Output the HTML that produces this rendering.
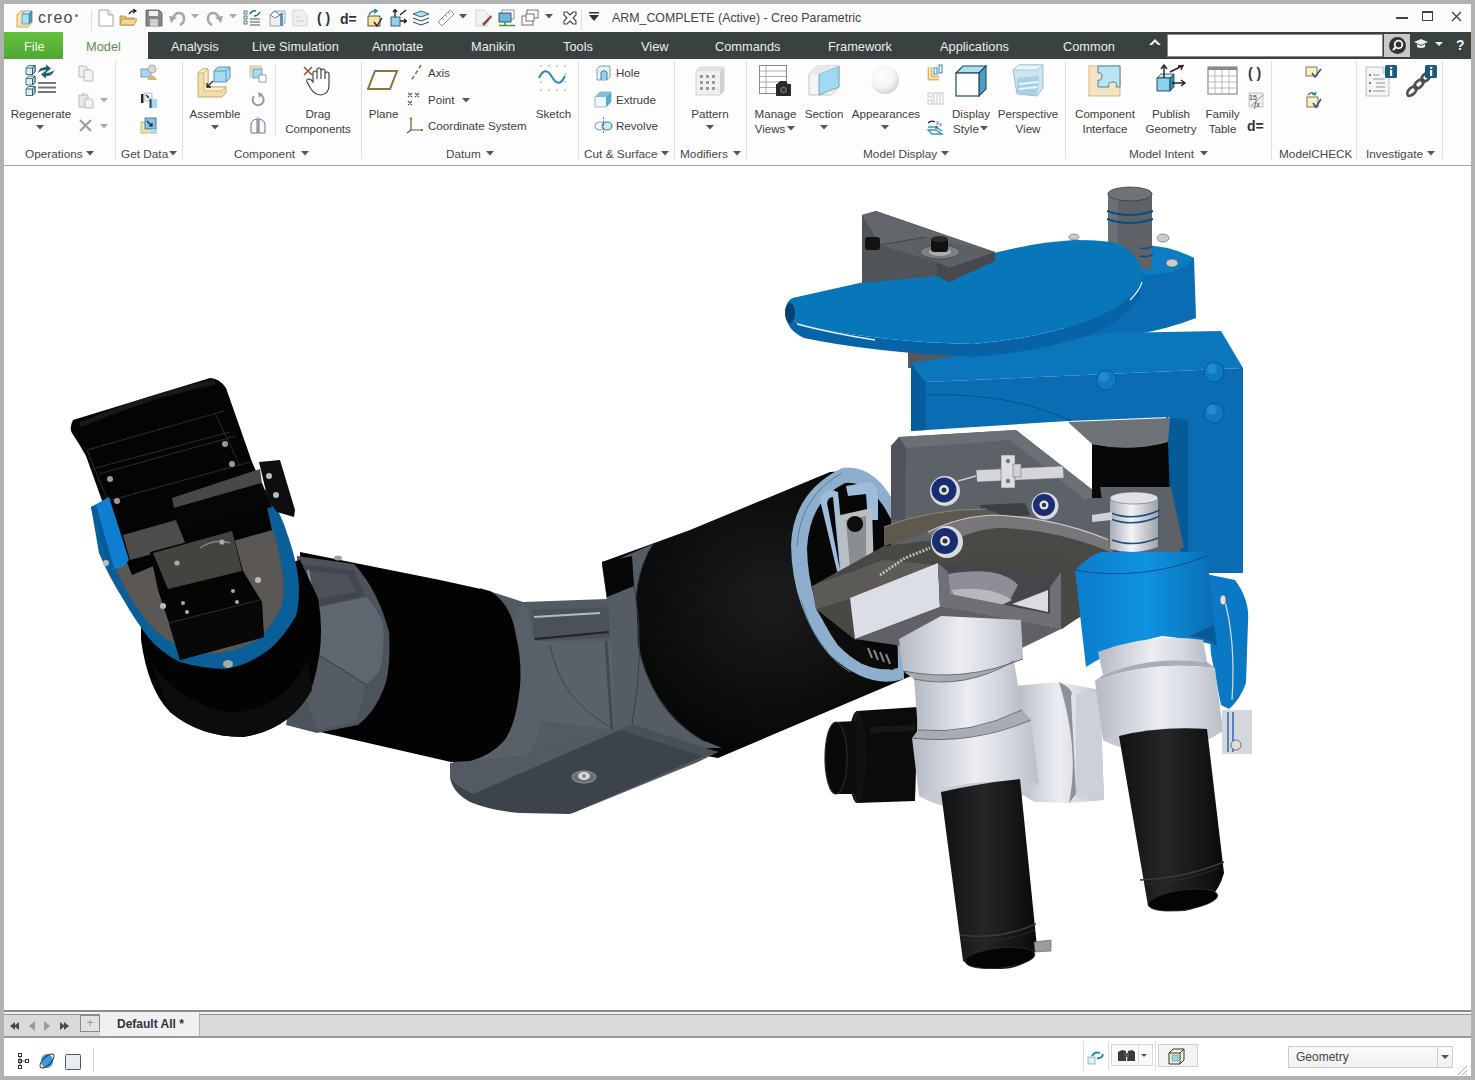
<!DOCTYPE html>
<html><head><meta charset="utf-8">
<style>
*{margin:0;padding:0;box-sizing:border-box}
html,body{width:1475px;height:1080px;overflow:hidden;background:#b2b2b2;font-family:"Liberation Sans",sans-serif;position:relative}
.a{position:absolute;white-space:nowrap}
.tab{position:absolute;top:33px;height:27px;line-height:27px;font-size:12.8px;color:#ececec}
.rt{position:absolute;font-size:11.6px;color:#3c3c3c;line-height:15px;text-align:center}
.gl{position:absolute;top:146px;font-size:11.8px;color:#444;line-height:14px}
.sep{position:absolute;top:65px;width:1px;height:94px;background:#dcdcdc}
.dd{display:inline-block;width:0;height:0;border-left:4px solid transparent;border-right:4px solid transparent;border-top:4px solid #555;vertical-align:middle;margin-left:4px;position:relative;top:-1px}
</style></head><body>
<!-- title bar -->
<div class="a" style="left:4px;top:4px;width:1467px;height:28px;background:#fbfbfb"></div>
<svg class="a" style="left:16px;top:10px" width="20" height="18" viewBox="0 0 20 18">
  <path d="M1 5 L5 1 L9 1 L9 11 L16 11 L16 13 L12 17 L1 17 Z" fill="#f7e2b2" stroke="#b39a66" stroke-width="0.8"/>
  <path d="M6 4 L9 1 L16 1 L13 4 Z" fill="#cdeefa" stroke="#3c7a94" stroke-width="0.6"/>
  <path d="M13 4 L16 1 L16 11 L13 14 Z" fill="#4f9fc4" stroke="#2c5a70" stroke-width="0.6"/>
  <rect x="6" y="4" width="7" height="10" fill="#a8def3" stroke="#3c7a94" stroke-width="0.6"/>
</svg>
<div class="a" style="left:38px;top:9px;font-size:16px;line-height:18px;color:#4a4a4a;letter-spacing:1.1px">creo</div><div class="a" style="left:75px;top:14px;width:3px;height:3px;border-radius:2px;background:#777"></div>
<div class="a" style="left:91px;top:10px;width:1px;height:21px;background:#dcdcdc"></div>
<!--QAT-->
<div class="a" style="left:612px;top:10px;font-size:12.4px;line-height:16px;color:#444">ARM_COMPLETE (Active) - Creo Parametric</div>
<div class="a" style="left:1396px;top:17px;width:12px;height:2px;background:#444"></div>
<div class="a" style="left:1422px;top:11px;width:11px;height:10px;border:1px solid #444;border-top-width:2px"></div>
<svg class="a" style="left:1451px;top:11px" width="11" height="11"><path d="M1 1 L10 10 M10 1 L1 10" stroke="#444" stroke-width="1.4"/></svg>

<!-- tabs -->
<div class="a" style="left:4px;top:32px;width:1467px;height:27px;background:#fbfbfb"></div>
<div class="a" style="left:4px;top:32px;width:59px;height:27px;background:linear-gradient(#66c03f,#4ea831)"></div>
<div class="tab" style="left:24px;color:#f0fbe8">File</div>
<div class="tab" style="left:86px;color:#5f8f50">Model</div>
<div class="a" style="left:148px;top:32px;width:1323px;height:27px;background:#394141"></div>
<div class="tab" style="left:171px">Analysis</div>
<div class="tab" style="left:252px">Live Simulation</div>
<div class="tab" style="left:372px">Annotate</div>
<div class="tab" style="left:471px">Manikin</div>
<div class="tab" style="left:563px">Tools</div>
<div class="tab" style="left:641px">View</div>
<div class="tab" style="left:715px">Commands</div>
<div class="tab" style="left:828px">Framework</div>
<div class="tab" style="left:940px">Applications</div>
<div class="tab" style="left:1063px">Common</div>
<svg class="a" style="left:1148px;top:37px" width="14" height="10"><path d="M1 8 L7 2 L13 8 L10 8 L7 5 L4 8 Z" fill="#f4f4f4"/></svg>
<div class="a" style="left:1167px;top:34px;width:216px;height:23px;background:#fff;border:1px solid #8a8a8a"></div>
<div class="a" style="left:1384px;top:34px;width:26px;height:23px;background:#c9c9c9"></div>
<svg class="a" style="left:1388px;top:36px" width="19" height="19"><circle cx="9.5" cy="9.5" r="8.5" fill="#2f3333"/><circle cx="10.5" cy="8.5" r="3.8" fill="none" stroke="#fff" stroke-width="1.8"/><path d="M8 11 L5 14" stroke="#fff" stroke-width="2.2"/></svg>
<svg class="a" style="left:1413px;top:38px" width="16" height="12"><path d="M1 4 L8 1 L15 4 L8 7 Z" fill="#eee"/><path d="M4 6 L4 9 Q8 11 12 9 L12 6 L8 8 Z" fill="#eee"/></svg>
<svg class="a" style="left:1434px;top:41px" width="10" height="6"><path d="M1 1 L9 1 L5 5 Z" fill="#eee"/></svg>
<div class="a" style="left:1456px;top:36px;font-size:14px;font-weight:bold;color:#f4f4f4;line-height:18px">?</div>

<!-- ribbon -->
<div class="a" style="left:4px;top:59px;width:1467px;height:107px;background:#fdfdfd;border-bottom:1px solid #a8a8a8"></div>
<div class="a" style="left:115px;top:61px;width:1px;height:98px;background:#dedede"></div>
<div class="a" style="left:182px;top:61px;width:1px;height:98px;background:#dedede"></div>
<div class="a" style="left:361px;top:61px;width:1px;height:98px;background:#dedede"></div>
<div class="a" style="left:578px;top:61px;width:1px;height:98px;background:#dedede"></div>
<div class="a" style="left:674px;top:61px;width:1px;height:98px;background:#dedede"></div>
<div class="a" style="left:746px;top:61px;width:1px;height:98px;background:#dedede"></div>
<div class="a" style="left:1065px;top:61px;width:1px;height:98px;background:#dedede"></div>
<div class="a" style="left:1271px;top:61px;width:1px;height:98px;background:#dedede"></div>
<div class="a" style="left:1356px;top:61px;width:1px;height:98px;background:#dedede"></div>
<div class="a" style="left:1442px;top:61px;width:1px;height:98px;background:#dedede"></div>
<div class="a" style="left:275px;top:64px;width:1px;height:72px;background:#dedede"></div>
<svg class="a" style="left:24px;top:64px" width="34" height="33" viewBox="0 0 34 33">
<g stroke="#2a4a5a" stroke-width="0.8">
<g><path d="M2 4 L4.5 1.5 L11 1.5 L11 8 L8.5 10.5 L2 10.5 Z" fill="#d6f0fa"/><path d="M2 4 L8.5 4 L11 1.5 M8.5 4 V10.5" fill="none"/><path d="M8.5 4 L11 1.5 L11 8 L8.5 10.5 Z" fill="#9fd3ea"/></g>
<g transform="translate(0,10.5)"><path d="M2 4 L4.5 1.5 L11 1.5 L11 8 L8.5 10.5 L2 10.5 Z" fill="#d6f0fa"/><path d="M2 4 L8.5 4 L11 1.5 M8.5 4 V10.5" fill="none"/><path d="M8.5 4 L11 1.5 L11 8 L8.5 10.5 Z" fill="#9fd3ea"/></g>
<g transform="translate(0,21)"><path d="M2 4 L4.5 1.5 L11 1.5 L11 8 L8.5 10.5 L2 10.5 Z" fill="#d6f0fa"/><path d="M2 4 L8.5 4 L11 1.5 M8.5 4 V10.5" fill="none"/><path d="M8.5 4 L11 1.5 L11 8 L8.5 10.5 Z" fill="#9fd3ea"/></g>
</g>
<path d="M14 9 Q15 3 22 3 L22 0.5 L27 4.5 L22 8.5 L22 6 Q17 6 14 9 Z" fill="#1f5f72"/>
<path d="M30 6 Q29 12 22 12 L22 14.5 L17 10.5 L22 6.5 L22 9 Q27 9 30 6 Z" fill="#1f5f72"/>
<rect x="14" y="18" width="18" height="2" fill="#777"/><rect x="14" y="22.5" width="18" height="2" fill="#777"/><rect x="14" y="27" width="18" height="2" fill="#777"/>
</svg>
<div class="rt" style="left:-19px;width:120px;top:106px;font-size:11.6px;color:#3c3c3c;">Regenerate</div>
<svg class="a" style="left:36px;top:125px" width="9" height="5"><path d="M0 0 L8 0 L4 4.5 Z" fill="#555"/></svg>
<svg class="a" style="left:78px;top:65px" width="17" height="17" viewBox="0 0 17 17"><path d="M1 1 H8 L10 3 V12 H1 Z" fill="#eee" stroke="#bbb"/><path d="M6 5 H13 L15 7 V16 H6 Z" fill="#f2f2f2" stroke="#bbb"/></svg>
<svg class="a" style="left:78px;top:92px" width="17" height="17" viewBox="0 0 17 17"><path d="M1 3 H10 V15 H1 Z" fill="#e8e8e8" stroke="#bbb"/><path d="M4 1 H7 V4 H4Z" fill="#ccc"/><path d="M7 7 H13 L15 9 V16 H7 Z" fill="#f2f2f2" stroke="#bbb"/></svg>
<svg class="a" style="left:100px;top:98px" width="9" height="5"><path d="M0 0 L8 0 L4 4.5 Z" fill="#aaa"/></svg>
<svg class="a" style="left:78px;top:118px" width="15" height="15" viewBox="0 0 15 15"><path d="M2 2 L13 13 M13 2 L2 13" stroke="#9a9a9a" stroke-width="2"/></svg>
<svg class="a" style="left:100px;top:124px" width="9" height="5"><path d="M0 0 L8 0 L4 4.5 Z" fill="#aaa"/></svg>
<div class="a" style="left:25px;top:147px;font-size:11.8px;line-height:15px;color:#474747">Operations</div>
<svg class="a" style="left:86px;top:151px" width="9" height="5"><path d="M0 0 L8 0 L4 4.5 Z" fill="#555"/></svg>
<svg class="a" style="left:140px;top:64px" width="18" height="18" viewBox="0 0 18 18"><rect x="1" y="5" width="10" height="8" fill="#a9d8ee" stroke="#5b8fa8" stroke-width="0.8"/><circle cx="12" cy="5" r="4" fill="#d9d9d9" stroke="#888" stroke-width="0.6"/><path d="M7 16 Q12 7 17 16 Z" fill="#e0b460"/></svg>
<svg class="a" style="left:140px;top:91px" width="18" height="18" viewBox="0 0 18 18"><rect x="1" y="3" width="2.5" height="9" fill="#222"/><rect x="4" y="2" width="8" height="8" fill="#e6eef2" stroke="#9ab" stroke-width="0.6"/><rect x="10" y="8" width="7" height="9" fill="#a9d8ee"/><rect x="9.5" y="8" width="2" height="9" fill="#1b4a5e"/><path d="M6 4 L9 7" stroke="#222" stroke-width="1.2"/></svg>
<svg class="a" style="left:140px;top:117px" width="18" height="18" viewBox="0 0 18 18"><rect x="1" y="5" width="11" height="11" fill="#f2e2b0" stroke="#b99a5a" stroke-width="0.7"/><rect x="5" y="1" width="11" height="11" fill="#7fc4e4" stroke="#356" stroke-width="0.7"/><path d="M7 4 L12 9 M12 6 V9 H9" stroke="#123" stroke-width="1.2" fill="none"/><rect x="11" y="12" width="6" height="5" fill="#a9d8ee"/></svg>
<div class="a" style="left:121px;top:147px;font-size:11.8px;line-height:15px;color:#474747">Get Data</div>
<svg class="a" style="left:169px;top:151px" width="9" height="5"><path d="M0 0 L8 0 L4 4.5 Z" fill="#555"/></svg>
<svg class="a" style="left:196px;top:65px" width="36" height="33" viewBox="0 0 36 33">
<path d="M2 8 L6 4 L12 4 L12 22 L30 22 L30 28 L26 32 L2 32 Z" fill="#f4dfa8" stroke="#b9995a" stroke-width="0.8"/>
<path d="M2 8 L6 4 L12 4 L8 8 Z M8 8 L8 26 L26 26 L30 22 L12 22 L12 4" fill="#fbedc6" stroke="#b9995a" stroke-width="0.6"/>
<path d="M18 6 L22 2 L34 2 L34 13 L30 17 L18 17 Z" fill="#a6dcf2" stroke="#3f7f9a" stroke-width="0.8"/>
<path d="M18 6 L30 6 L34 2 M30 6 L30 17" fill="none" stroke="#3f7f9a" stroke-width="0.7"/>
<path d="M17 16 L11 22 M11 18 V22 H15" stroke="#222" stroke-width="1.3" fill="none"/>
</svg>
<div class="rt" style="left:155px;width:120px;top:106px;font-size:11.6px;color:#3c3c3c;">Assemble</div>
<svg class="a" style="left:211px;top:125px" width="9" height="5"><path d="M0 0 L8 0 L4 4.5 Z" fill="#555"/></svg>
<svg class="a" style="left:249px;top:65px" width="18" height="18" viewBox="0 0 18 18"><rect x="1" y="1" width="11" height="11" fill="#f0e2b8" stroke="#aaa" stroke-width="0.7"/><rect x="4" y="4" width="9" height="9" fill="#a6dcf2" stroke="#4a8aa5" stroke-width="0.7"/><rect x="10" y="10" width="7" height="7" fill="#fff" stroke="#777" stroke-width="0.7"/></svg>
<svg class="a" style="left:250px;top:91px" width="16" height="16" viewBox="0 0 16 16"><path d="M4 5 A5.5 5.5 0 1 0 11 4" stroke="#9a9a9a" stroke-width="2" fill="none"/><path d="M8 1 L13 3 L9 7 Z" fill="#9a9a9a"/></svg>
<svg class="a" style="left:249px;top:117px" width="18" height="17" viewBox="0 0 18 17"><path d="M8 2 Q2 3 2 8 L2 16 L8 16 Z M10 2 Q16 3 16 8 L16 16 L10 16 Z" fill="none" stroke="#7a6a8a" stroke-width="1"/><path d="M9 0 V17" stroke="#7a6a8a" stroke-width="0.8"/></svg>
<svg class="a" style="left:302px;top:65px" width="32" height="32" viewBox="0 0 32 32">
<path d="M2 2 L10 10 M10 2 L2 10" stroke="#8a5a3a" stroke-width="1.6"/>
<path d="M11 17 L11 8 Q11 6 13 6 Q15 6 15 8 L15 14 L15 5 Q15 3 17 3 Q19 3 19 5 L19 14 L19 6 Q19 4 21 4 Q23 4 23 6 L23 14 L23 9 Q23 7 25 7 Q27 7 27 9 L27 20 Q27 29 19 30 Q13 30 9 24 L5 17 Q4 14 7 14 Q9 14 11 17 Z" fill="#fff" stroke="#333" stroke-width="1.1"/>
</svg>
<div class="rt" style="left:258px;width:120px;top:106px;font-size:11.6px;color:#3c3c3c;">Drag</div>
<div class="rt" style="left:258px;width:120px;top:121px;font-size:11.6px;color:#3c3c3c;">Components</div>
<div class="a" style="left:234px;top:147px;font-size:11.8px;line-height:15px;color:#474747">Component</div>
<svg class="a" style="left:301px;top:151px" width="9" height="5"><path d="M0 0 L8 0 L4 4.5 Z" fill="#555"/></svg>
<svg class="a" style="left:367px;top:69px" width="32" height="22" viewBox="0 0 32 22"><path d="M8 2 L30 2 L23 20 L1 20 Z" fill="#fff" stroke="#8a7440" stroke-width="2"/></svg>
<div class="rt" style="left:323.5px;width:120px;top:106px;font-size:11.6px;color:#3c3c3c;">Plane</div>
<svg class="a" style="left:409px;top:64px" width="14" height="18" viewBox="0 0 14 18"><path d="M12 1 L2 17" stroke="#8a7440" stroke-width="1.6" stroke-dasharray="4 2.5"/></svg>
<div class="a" style="left:428px;top:65px;font-size:11.6px;line-height:15px;color:#3c3c3c">Axis</div>
<svg class="a" style="left:406px;top:91px" width="18" height="16" viewBox="0 0 18 16"><path d="M2 2 L6 6 M6 2 L2 6 M9 2 L13 6 M13 2 L9 6 M2 10 L6 14 M6 10 L2 14" stroke="#6a5a30" stroke-width="1.1"/></svg>
<div class="a" style="left:428px;top:92px;font-size:11.6px;line-height:15px;color:#3c3c3c">Point</div>
<svg class="a" style="left:462px;top:98px" width="9" height="5"><path d="M0 0 L8 0 L4 4.5 Z" fill="#555"/></svg>
<svg class="a" style="left:406px;top:117px" width="18" height="17" viewBox="0 0 18 17"><path d="M5 1 V13 L16 13 M5 13 L1 16" stroke="#6a5a30" stroke-width="1.2" fill="none"/><circle cx="5" cy="1.5" r="1" fill="#6a5a30"/><circle cx="16" cy="13" r="1" fill="#6a5a30"/></svg>
<div class="a" style="left:428px;top:118px;font-size:11.6px;line-height:15px;color:#3c3c3c">Coordinate System</div>
<svg class="a" style="left:537px;top:64px" width="30" height="30" viewBox="0 0 30 30">
<g fill="#777"><circle cx="4" cy="2" r="0.7"/><circle cx="12" cy="2" r="0.7"/><circle cx="20" cy="2" r="0.7"/><circle cx="28" cy="2" r="0.7"/>
<circle cx="4" cy="10" r="0.7"/><circle cx="28" cy="10" r="0.7"/><circle cx="4" cy="18" r="0.7"/><circle cx="28" cy="18" r="0.7"/>
<circle cx="4" cy="26" r="0.7"/><circle cx="12" cy="26" r="0.7"/><circle cx="20" cy="26" r="0.7"/><circle cx="28" cy="26" r="0.7"/></g>
<path d="M2 14 Q8 1 15 13 Q22 25 28 12" stroke="#2a8aa8" stroke-width="2" fill="none"/>
</svg>
<div class="rt" style="left:493.5px;width:120px;top:106px;font-size:11.6px;color:#3c3c3c;">Sketch</div>
<div class="a" style="left:446px;top:147px;font-size:11.8px;line-height:15px;color:#474747">Datum</div>
<svg class="a" style="left:486px;top:151px" width="9" height="5"><path d="M0 0 L8 0 L4 4.5 Z" fill="#555"/></svg>
<svg class="a" style="left:595px;top:65px" width="18" height="16" viewBox="0 0 18 16"><path d="M2 4 L5 1 L15 1 L15 12 L12 15 L2 15 Z" fill="#e6f2f6" stroke="#6a8a98" stroke-width="0.8"/><path d="M6 15 V7 Q9 4 12 7 V15" fill="#8fd0ea" stroke="#2a6a82" stroke-width="0.8"/></svg>
<div class="a" style="left:616px;top:65px;font-size:11.6px;line-height:15px;color:#3c3c3c">Hole</div>
<svg class="a" style="left:594px;top:91px" width="18" height="17" viewBox="0 0 18 17"><path d="M1 6 L6 1 L17 1 L17 11 L12 16 L1 16 Z" fill="#eef6f8" stroke="#8aa" stroke-width="0.8"/><path d="M6 1 L17 1 L12 6 L1 6 Z" fill="#7fbfdc"/><path d="M12 6 L17 1 L17 11 L12 16 Z" fill="#5aa8cc"/></svg>
<div class="a" style="left:616px;top:92px;font-size:11.6px;line-height:15px;color:#3c3c3c">Extrude</div>
<svg class="a" style="left:594px;top:117px" width="19" height="17" viewBox="0 0 19 17"><ellipse cx="6" cy="9" rx="5" ry="4" fill="none" stroke="#8ab" stroke-width="1.2"/><ellipse cx="13" cy="9" rx="5" ry="4" fill="#cfe9f3" stroke="#3a8ab0" stroke-width="1.2"/><path d="M9.5 0 V17" stroke="#555" stroke-width="0.8" stroke-dasharray="2 1.5"/></svg>
<div class="a" style="left:616px;top:118px;font-size:11.6px;line-height:15px;color:#3c3c3c">Revolve</div>
<div class="a" style="left:584px;top:147px;font-size:11.8px;line-height:15px;color:#474747">Cut &amp; Surface</div>
<svg class="a" style="left:661px;top:151px" width="9" height="5"><path d="M0 0 L8 0 L4 4.5 Z" fill="#555"/></svg>
<svg class="a" style="left:694px;top:65px" width="32" height="32" viewBox="0 0 32 32">
<path d="M2 6 L6 2 L30 2 L30 26 L26 30 L2 30 Z" fill="#f0f0f0" stroke="#c8c8c8" stroke-width="0.8"/>
<path d="M26 6 L30 2 L30 26 L26 30 Z" fill="#d2d2d2"/><path d="M2 6 L6 2 L30 2 L26 6 Z" fill="#e2e2e2"/>
<g fill="#9a9a9a"><rect x="6" y="10" width="3" height="3"/><rect x="12" y="10" width="3" height="3"/><rect x="18" y="10" width="3" height="3"/>
<rect x="6" y="16" width="3" height="3"/><rect x="12" y="16" width="3" height="3"/><rect x="18" y="16" width="3" height="3"/>
<rect x="6" y="22" width="3" height="3"/><rect x="12" y="22" width="3" height="3"/><rect x="18" y="22" width="3" height="3"/></g>
</svg>
<div class="rt" style="left:650px;width:120px;top:106px;font-size:11.6px;color:#3c3c3c;">Pattern</div>
<svg class="a" style="left:706px;top:125px" width="9" height="5"><path d="M0 0 L8 0 L4 4.5 Z" fill="#555"/></svg>
<div class="a" style="left:680px;top:147px;font-size:11.8px;line-height:15px;color:#474747">Modifiers</div>
<svg class="a" style="left:733px;top:151px" width="9" height="5"><path d="M0 0 L8 0 L4 4.5 Z" fill="#555"/></svg>
<svg class="a" style="left:758px;top:64px" width="35" height="34" viewBox="0 0 35 34">
<rect x="1.5" y="1.5" width="27" height="28" fill="#fff" stroke="#888" stroke-width="1"/>
<path d="M1.5 7 H28.5 M1.5 12.5 H28.5 M1.5 18 H28.5 M1.5 23.5 H28.5 M8 1.5 V29.5" stroke="#999" stroke-width="0.8"/>
<path d="M19 20 L22 17 L28 17 L30 20 L33 20 L33 32 L18 32 L18 20 Z" fill="#2a2a2a"/>
<circle cx="25.5" cy="26" r="4.2" fill="#666" stroke="#111" stroke-width="1"/><circle cx="25.5" cy="26" r="2" fill="#333"/>
</svg>
<div class="rt" style="left:715.5px;width:120px;top:106px;font-size:11.6px;color:#3c3c3c;">Manage</div>
<div class="rt" style="left:710px;width:120px;top:121px;font-size:11.6px;color:#3c3c3c;">Views</div>
<svg class="a" style="left:787px;top:126px" width="9" height="5"><path d="M0 0 L8 0 L4 4.5 Z" fill="#555"/></svg>
<svg class="a" style="left:807px;top:64px" width="34" height="33" viewBox="0 0 34 33">
<path d="M2 10 L10 2 L32 2 L32 23 L24 31 L2 31 Z" fill="#f4f4f4" stroke="#b5b5b5" stroke-width="0.8"/>
<path d="M12 10 L32 2 L32 23 L12 31 Z" fill="#9fdaf2" stroke="#5a9ab8" stroke-width="0.8"/>
<path d="M2 10 L10 2 L32 2 L12 10 Z" fill="#e8e8e8"/>
</svg>
<div class="rt" style="left:764px;width:120px;top:106px;font-size:11.6px;color:#3c3c3c;">Section</div>
<svg class="a" style="left:820px;top:125px" width="9" height="5"><path d="M0 0 L8 0 L4 4.5 Z" fill="#555"/></svg>
<svg class="a" style="left:869px;top:64px" width="32" height="32" viewBox="0 0 32 32"><defs><radialGradient id="sph" cx="0.4" cy="0.35" r="0.7"><stop offset="0" stop-color="#fff"/><stop offset="0.6" stop-color="#f4f4f4"/><stop offset="1" stop-color="#cfcfcf"/></radialGradient></defs><circle cx="16" cy="16" r="14" fill="url(#sph)"/></svg>
<div class="rt" style="left:826px;width:120px;top:106px;font-size:11.6px;color:#3c3c3c;">Appearances</div>
<svg class="a" style="left:881px;top:125px" width="9" height="5"><path d="M0 0 L8 0 L4 4.5 Z" fill="#555"/></svg>
<svg class="a" style="left:927px;top:64px" width="17" height="17" viewBox="0 0 17 17"><path d="M1.5 3 V15.5 H12 M4.5 3 V12.5 H12" stroke="#e8b860" stroke-width="1.8" fill="none"/><rect x="7" y="4" width="3" height="6" fill="none" stroke="#2a8ab0" stroke-width="1"/><rect x="12" y="1" width="3" height="8" fill="none" stroke="#2a8ab0" stroke-width="1"/></svg>
<svg class="a" style="left:927px;top:92px" width="17" height="16" viewBox="0 0 17 16"><g fill="none" stroke="#c8c8c8" stroke-width="1"><rect x="1" y="1" width="4" height="4"/><rect x="1" y="8" width="4" height="4"/><rect x="7" y="1" width="9" height="11"/><path d="M10 1 V12 M13 1 V12"/></g></svg>
<svg class="a" style="left:926px;top:117px" width="19" height="18" viewBox="0 0 19 18"><path d="M2 13 L10 13 L16 17 L6 17 Z M2 10 L10 10 L16 14" fill="none" stroke="#2a9ac0" stroke-width="1.3"/><path d="M2 6 Q5 3 9 5" stroke="#222" stroke-width="1.2" fill="none"/><text x="10" y="7" font-size="6" font-family="Liberation Sans" fill="#333">y</text><text x="13" y="9" font-size="6" font-family="Liberation Sans" fill="#333">x</text><text x="9" y="12" font-size="6" font-family="Liberation Sans" fill="#333">z</text></svg>
<svg class="a" style="left:954px;top:64px" width="34" height="34" viewBox="0 0 34 34">
<path d="M2 9 L9 2 L32 2 L25 9 Z" fill="#aee0f4" stroke="#1f4a5a" stroke-width="1.1"/>
<path d="M25 9 L32 2 L32 25 L25 32 Z" fill="#4aa0c8" stroke="#1f4a5a" stroke-width="1.1"/>
<rect x="2" y="9" width="23" height="23" fill="#fff" stroke="#1f4a5a" stroke-width="1.2"/>
</svg>
<div class="rt" style="left:911px;width:120px;top:106px;font-size:11.6px;color:#3c3c3c;">Display</div>
<div class="rt" style="left:906px;width:120px;top:121px;font-size:11.6px;color:#3c3c3c;">Style</div>
<svg class="a" style="left:980px;top:126px" width="9" height="5"><path d="M0 0 L8 0 L4 4.5 Z" fill="#555"/></svg>
<svg class="a" style="left:1011px;top:64px" width="34" height="34" viewBox="0 0 34 34">
<path d="M2 6 L8 1 L32 1 L32 24 L26 32 L6 30 Z" fill="#cfe4ee" stroke="#8ab4c8" stroke-width="0.8"/>
<path d="M6 14 L28 12 L26 32 L6 30 Z" fill="#9ccbe0" opacity="0.8"/>
<path d="M8 20 L27 18 M8 25 L26 23" stroke="#e8f6fb" stroke-width="2"/>
<path d="M2 6 L8 1 L32 1 L26 6 Z" fill="#e8f3f8" stroke="#8ab4c8" stroke-width="0.6"/>
</svg>
<div class="rt" style="left:968px;width:120px;top:106px;font-size:11.6px;color:#3c3c3c;">Perspective</div>
<div class="rt" style="left:968px;width:120px;top:121px;font-size:11.6px;color:#3c3c3c;">View</div>
<div class="a" style="left:863px;top:147px;font-size:11.8px;line-height:15px;color:#474747">Model Display</div>
<svg class="a" style="left:941px;top:151px" width="9" height="5"><path d="M0 0 L8 0 L4 4.5 Z" fill="#555"/></svg>
<svg class="a" style="left:1088px;top:65px" width="33" height="32" viewBox="0 0 33 32">
<rect x="1" y="1" width="31" height="30" fill="#f6e4c0" stroke="#caa868" stroke-width="0.8"/>
<path d="M10 1 H32 V22 H28 Q30 17 25 17 Q19 17 21 22 H10 V15 Q14 16 14 11 Q14 7 10 8 Z" fill="#b8e4f4" stroke="#3a7a94" stroke-width="0.9"/>
</svg>
<div class="rt" style="left:1045px;width:120px;top:106px;font-size:11.6px;color:#3c3c3c;">Component</div>
<div class="rt" style="left:1045px;width:120px;top:121px;font-size:11.6px;color:#3c3c3c;">Interface</div>
<svg class="a" style="left:1154px;top:64px" width="33" height="34" viewBox="0 0 33 34">
<path d="M3 14 L7 10 L20 10 L16 14 Z" fill="#cfeaf6" stroke="#1f3f4f" stroke-width="0.8"/>
<rect x="3" y="14" width="13" height="13" fill="#8ed0ee" stroke="#1f3f4f" stroke-width="0.9"/>
<path d="M16 14 L20 10 L20 23 L16 27 Z" fill="#3a8ab0" stroke="#1f3f4f" stroke-width="0.8"/>
<path d="M10 14 V2 M7 5 L10 1 L13 5 M16 8 L28 2 M24 2 L29 1.5 L27 6 M18 19 H30 M27 16 L31 19 L27 22" stroke="#222" stroke-width="1.4" fill="none"/>
</svg>
<div class="rt" style="left:1111px;width:120px;top:106px;font-size:11.6px;color:#3c3c3c;">Publish</div>
<div class="rt" style="left:1111px;width:120px;top:121px;font-size:11.6px;color:#3c3c3c;">Geometry</div>
<svg class="a" style="left:1207px;top:66px" width="31" height="30" viewBox="0 0 31 30">
<rect x="1" y="1" width="29" height="27" fill="#fff" stroke="#777" stroke-width="1"/>
<rect x="1" y="1" width="29" height="3" fill="#888"/>
<path d="M1 10 H30 M1 16 H30 M1 22 H30 M8 4 V28 M15 4 V28 M22 4 V28" stroke="#aaa" stroke-width="0.8"/>
</svg>
<div class="rt" style="left:1162.5px;width:120px;top:106px;font-size:11.6px;color:#3c3c3c;">Family</div>
<div class="rt" style="left:1162.5px;width:120px;top:121px;font-size:11.6px;color:#3c3c3c;">Table</div>
<svg class="a" style="left:1248px;top:65px" width="16" height="16" viewBox="0 0 16 16"><text x="0" y="13" font-size="14" font-family="Liberation Sans" font-weight="bold" fill="#333">( )</text></svg>
<svg class="a" style="left:1247px;top:91px" width="18" height="18" viewBox="0 0 18 18"><rect x="2" y="2" width="14" height="14" fill="#eee" stroke="#aaa" stroke-width="0.7"/><text x="2" y="9" font-size="7" font-family="Liberation Sans" fill="#333">15</text><text x="7" y="16" font-size="8" font-style="italic" font-family="Liberation Serif" fill="#333">fx</text><path d="M4 15 L16 4" stroke="#555" stroke-width="0.6"/></svg>
<svg class="a" style="left:1247px;top:117px" width="18" height="17" viewBox="0 0 18 17"><text x="0" y="14" font-size="14" font-family="Liberation Sans" font-weight="bold" fill="#333">d=</text></svg>
<div class="a" style="left:1129px;top:147px;font-size:11.8px;line-height:15px;color:#474747">Model Intent</div>
<svg class="a" style="left:1200px;top:151px" width="9" height="5"><path d="M0 0 L8 0 L4 4.5 Z" fill="#555"/></svg>
<svg class="a" style="left:1304px;top:65px" width="18" height="16" viewBox="0 0 18 16"><rect x="2" y="2" width="11" height="9" fill="#fbf0c0" stroke="#555" stroke-width="0.8"/><path d="M8 8 L11 12 L17 4" stroke="#2a5a6a" stroke-width="1.6" fill="none"/></svg>
<svg class="a" style="left:1304px;top:91px" width="18" height="18" viewBox="0 0 18 18"><rect x="3" y="6" width="11" height="10" fill="#fbf0c0" stroke="#555" stroke-width="0.8"/><path d="M9 12 L12 16 L17 8" stroke="#2a5a6a" stroke-width="1.6" fill="none"/><path d="M4 4 Q7 0 11 3 M12 1 L11 4 L8 3" stroke="#1f7aa0" stroke-width="1.3" fill="none"/></svg>
<div class="a" style="left:1279px;top:147px;font-size:11.8px;line-height:15px;color:#474747">ModelCHECK</div>
<svg class="a" style="left:1364px;top:64px" width="34" height="34" viewBox="0 0 34 34">
<path d="M2 3 H19 L25 9 V32 H2 Z" fill="#f6f6f6" stroke="#b0b0b0" stroke-width="0.8"/>
<path d="M19 3 V9 H25" fill="#ddd" stroke="#b0b0b0" stroke-width="0.6"/>
<g fill="#556"><circle cx="6" cy="11" r="1"/><circle cx="6" cy="19" r="1"/><circle cx="6" cy="27" r="1"/></g>
<path d="M9 11 H15 M9 15 H21 M12 19 H21 M12 23 H21 M9 27 H21" stroke="#8a8a8a" stroke-width="0.9"/>
<rect x="21" y="1" width="12" height="13" rx="1.5" fill="#1a5a7a"/><rect x="26" y="6" width="2.2" height="6" fill="#fff"/><rect x="26" y="2.8" width="2.2" height="2" fill="#fff"/>
</svg>
<svg class="a" style="left:1404px;top:64px" width="34" height="34" viewBox="0 0 34 34">
<g fill="none" stroke="#505050" stroke-width="2.6">
<ellipse cx="8" cy="27" rx="6" ry="3.2" transform="rotate(-45 8 27)"/>
<ellipse cx="15" cy="20" rx="6" ry="3.2" transform="rotate(-45 15 20)"/>
<ellipse cx="22" cy="13" rx="6" ry="3.2" transform="rotate(-45 22 13)"/>
</g>
<rect x="21" y="1" width="12" height="13" rx="1.5" fill="#1a5a7a"/><rect x="26" y="6" width="2.2" height="6" fill="#fff"/><rect x="26" y="2.8" width="2.2" height="2" fill="#fff"/>
</svg>
<div class="a" style="left:1366px;top:147px;font-size:11.8px;line-height:15px;color:#474747">Investigate</div>
<svg class="a" style="left:1427px;top:151px" width="9" height="5"><path d="M0 0 L8 0 L4 4.5 Z" fill="#555"/></svg>
<svg class="a" style="left:97px;top:9px" width="18" height="18" viewBox="0 0 18 18"><path d="M2 1 H11 L16 6 V17 H2 Z" fill="#fff" stroke="#999" stroke-width="0.9"/><path d="M11 1 V6 H16" fill="#eee" stroke="#999" stroke-width="0.8"/></svg>
<svg class="a" style="left:119px;top:9px" width="18" height="18" viewBox="0 0 18 18"><path d="M1 7 H6 L8 9 H15 V16 H1 Z" fill="#e8c070" stroke="#b08a3a" stroke-width="0.8"/><path d="M3 10 H18 L15 16 H1 Z" fill="#f4d690" stroke="#b08a3a" stroke-width="0.8"/><path d="M10 5 Q12 1 16 2 M14 0 L17 2 L14 4" stroke="#222" stroke-width="1.3" fill="none"/></svg>
<svg class="a" style="left:145px;top:9px" width="18" height="18" viewBox="0 0 18 18"><path d="M1 1 H14 L17 4 V17 H1 Z" fill="#888" stroke="#555" stroke-width="0.8"/><rect x="4" y="2" width="9" height="5" fill="#eee"/><rect x="5" y="10" width="8" height="7" fill="#cfcfcf"/></svg>
<svg class="a" style="left:168px;top:9px" width="18" height="18" viewBox="0 0 18 18"><path d="M5 9 Q7 4 11 4 Q16 4 16 10 Q16 14 12 16" stroke="#a8a8a8" stroke-width="2.6" fill="none"/><path d="M1 7 L9 8 L3 14 Z" fill="#a8a8a8"/></svg>
<svg class="a" style="left:191px;top:14px" width="9" height="6" viewBox="0 0 9 6"><path d="M0 0 L8 0 L4 4.5 Z" fill="#aaa"/></svg>
<svg class="a" style="left:206px;top:9px" width="18" height="18" viewBox="0 0 18 18"><path d="M13 9 Q11 4 7 4 Q2 4 2 10 Q2 14 6 16" stroke="#a8a8a8" stroke-width="2.6" fill="none"/><path d="M17 7 L9 8 L15 14 Z" fill="#a8a8a8"/></svg>
<svg class="a" style="left:229px;top:14px" width="9" height="6" viewBox="0 0 9 6"><path d="M0 0 L8 0 L4 4.5 Z" fill="#aaa"/></svg>
<svg class="a" style="left:243px;top:9px" width="18" height="18" viewBox="0 0 18 18"><g fill="none" stroke="#2a5a6a" stroke-width="0.8"><rect x="1" y="2" width="3" height="3"/><rect x="1" y="7" width="3" height="3"/><rect x="1" y="12" width="3" height="3"/></g><path d="M7 5 Q9 1 13 2 M11 7 Q15 7 17 3" stroke="#1f6f80" stroke-width="1.6" fill="none"/><path d="M7 10 H17 M7 13 H17 M7 16 H17" stroke="#555" stroke-width="1"/></svg>
<svg class="a" style="left:268px;top:9px" width="18" height="18" viewBox="0 0 18 18"><path d="M2 6 L7 2 L17 2 L17 14 L12 17 L2 17 Z" fill="#e8f2f6" stroke="#7a98a8" stroke-width="0.8"/><path d="M2 6 L7 2 L12 6 L7 9 Z" fill="#fff" stroke="#555" stroke-width="0.8"/><rect x="12" y="4" width="3" height="13" fill="#5a9ab8"/></svg>
<svg class="a" style="left:291px;top:9px" width="18" height="18" viewBox="0 0 18 18"><path d="M2 1 H11 L16 6 V17 H2 Z" fill="#f0f0f0" stroke="#ccc" stroke-width="0.8"/><path d="M5 8 H9 M5 12 H13" stroke="#ccc"/></svg>
<svg class="a" style="left:317px;top:9px" width="18" height="18" viewBox="0 0 18 18"><text x="0" y="14" font-size="14" font-family="Liberation Sans" font-weight="bold" fill="#333">( )</text></svg>
<svg class="a" style="left:340px;top:9px" width="20" height="18" viewBox="0 0 20 18"><text x="0" y="15" font-size="14" font-family="Liberation Sans" font-weight="bold" fill="#333">d=</text></svg>
<svg class="a" style="left:365px;top:9px" width="18" height="18" viewBox="0 0 18 18"><rect x="3" y="7" width="12" height="10" fill="#f4e4a8" stroke="#333" stroke-width="0.8"/><path d="M4 6 Q6 1 11 2 M9 0 L12 2 L9 4" stroke="#1a7a90" stroke-width="1.4" fill="none"/><path d="M9 13 L12 17 L17 9" stroke="#222" stroke-width="1.4" fill="none"/></svg>
<svg class="a" style="left:389px;top:9px" width="18" height="18" viewBox="0 0 18 18"><rect x="2" y="8" width="9" height="9" fill="#8ed0ee" stroke="#1f3f4f" stroke-width="0.8"/><path d="M6 8 V1 M4 3 L6 0.5 L8 3 M11 6 L17 1 M11 12 H17 M15 10 L17.5 12 L15 14" stroke="#222" stroke-width="1.3" fill="none"/></svg>
<svg class="a" style="left:412px;top:9px" width="18" height="18" viewBox="0 0 18 18"><path d="M1 5 L9 2 L17 5 L9 8 Z" fill="#aee0f0" stroke="#2a5a6a" stroke-width="0.9"/><path d="M1 9 L9 12 L17 9 M1 13 L9 16 L17 13" stroke="#2a5a6a" stroke-width="1.1" fill="none"/></svg>
<svg class="a" style="left:437px;top:9px" width="18" height="18" viewBox="0 0 18 18"><path d="M1 13 L13 1 L17 5 L5 17 Z" fill="#fff" stroke="#888" stroke-width="0.9"/><path d="M5 9 L7 11 M8 6 L10 8 M11 3 L13 5" stroke="#888" stroke-width="0.8"/></svg>
<svg class="a" style="left:459px;top:14px" width="9" height="6" viewBox="0 0 9 6"><path d="M0 0 L8 0 L4 4.5 Z" fill="#555"/></svg>
<svg class="a" style="left:474px;top:9px" width="18" height="18" viewBox="0 0 18 18"><path d="M2 1 H10 L14 5 V17 H2 Z" fill="#f2f2f2" stroke="#ccc" stroke-width="0.8"/><path d="M8 15 L17 6 L18 8 L10 17 Z" fill="#8a4a3a"/></svg>
<svg class="a" style="left:498px;top:9px" width="18" height="18" viewBox="0 0 18 18"><rect x="4" y="1" width="12" height="9" fill="#fff" stroke="#777" stroke-width="0.8"/><rect x="1" y="4" width="12" height="9" fill="#6ab8dc" stroke="#1f4f5f" stroke-width="0.9"/><path d="M7 13 V16 M1 16.5 H17" stroke="#3aa03a" stroke-width="1.6"/></svg>
<svg class="a" style="left:521px;top:9px" width="18" height="18" viewBox="0 0 18 18"><g fill="none" stroke="#666" stroke-width="0.9"><rect x="6" y="1" width="11" height="8"/><rect x="1" y="7" width="11" height="9"/></g><rect x="5" y="5" width="8" height="7" fill="#fff" stroke="#666" stroke-width="0.9"/></svg>
<svg class="a" style="left:545px;top:14px" width="9" height="6" viewBox="0 0 9 6"><path d="M0 0 L8 0 L4 4.5 Z" fill="#555"/></svg>
<svg class="a" style="left:561px;top:9px" width="18" height="18" viewBox="0 0 18 18"><path d="M3 3 L6 3 L9 6 L12 3 L15 3 L15 6 L12 9 L15 12 L15 15 L12 15 L9 12 L6 15 L3 15 L3 12 L6 9 L3 6 Z" fill="#fff" stroke="#444" stroke-width="1.1"/></svg>
<div class="a" style="left:581px;top:9px;width:1px;height:21px;background:#dcdcdc"></div>
<svg class="a" style="left:588px;top:12px" width="12" height="10" viewBox="0 0 12 10"><rect x="1" y="0" width="10" height="1.5" fill="#333"/><path d="M1 3 L11 3 L6 9 Z" fill="#333"/></svg>

<!-- graphics -->
<div class="a" style="left:4px;top:166px;width:1467px;height:844px;background:#fff"></div>
<svg class="a" style="left:0;top:0" width="1475" height="1080" viewBox="0 0 1475 1080">
<defs>
  <linearGradient id="blk" x1="0" y1="0" x2="0" y2="1">
    <stop offset="0" stop-color="#0a0a0a"/><stop offset="0.35" stop-color="#1c1c1c"/><stop offset="1" stop-color="#020202"/>
  </linearGradient>
  <linearGradient id="lgray" x1="0" y1="0" x2="1" y2="0">
    <stop offset="0" stop-color="#aeb2ba"/><stop offset="0.45" stop-color="#eef0f4"/><stop offset="1" stop-color="#b8bcc4"/>
  </linearGradient>
  <linearGradient id="btube" x1="0" y1="0" x2="1" y2="0">
    <stop offset="0" stop-color="#0a0a0a"/><stop offset="0.4" stop-color="#2a2a2a"/><stop offset="1" stop-color="#080808"/>
  </linearGradient>
</defs>

<!-- ===== upper arm black cylinder (cyl3) ===== -->
<defs>
<radialGradient id="c3g" cx="0.55" cy="0.45" r="0.6"><stop offset="0" stop-color="#1c1c1c"/><stop offset="1" stop-color="#040404"/></radialGradient>
</defs>
<polygon points="602,562 690,530 830,472 860,470 905,540 911,676 718,758 660,748 628,724 607,600" fill="url(#c3g)"/>
<path d="M653,544 Q630,580 637,640 Q650,710 700,739 L722,748 L660,748 L628,724 L607,600 L602,566 Z" fill="#565c64"/>
<path d="M653,544 Q630,580 637,640 Q650,710 705,742" stroke="#2e3136" stroke-width="1" fill="none"/>


<!-- ===== elbow gray joint ===== -->
<!-- main gray mass -->
<path d="M480,588 L523,602 L607,599 L634,586 Q642,640 632,724 Q660,745 718,752 L698,762 L573,813 L496,808 L465,797 L451,780 L451,766 L460,750 L505,700 L505,640 L480,600 Z" fill="#545a62"/>
<!-- socket lighter face -->
<path d="M523,602 Q545,650 543,719 L529,758 L470,761 L505,700 L505,640 Z" fill="#5a6068"/>
<!-- slot bar -->
<polygon points="532,610 609,607 609,638 534,641" fill="#4b5159"/>
<path d="M534,617 L600,613" stroke="#b8bcc2" stroke-width="2" fill="none"/>
<path d="M535,639 L609,632" stroke="#222" stroke-width="2" fill="none"/>
<!-- center face -->
<path d="M534,641 L612,641 L615,730 L543,721 Z" fill="#5b6169"/>
<path d="M550,645 Q560,700 612,728" stroke="#3e4248" stroke-width="1" fill="none"/>
<path d="M606,641 L612,730" stroke="#44484e" stroke-width="3" fill="none"/>
<!-- right curved face -->
<path d="M607,599 L634,586 Q642,640 632,724 L615,730 L612,641 Z" fill="#565c64"/>
<path d="M634,586 Q646,650 632,724 Q660,745 718,752" stroke="#3a3d42" stroke-width="1" fill="none"/>
<!-- black cap block -->
<polygon points="602,562 632,556 634,586 607,597" fill="#060606"/>
<!-- bottom plate -->
<path d="M450,777 Q452,792 470,802 Q492,811 520,813 L570,814 L704,756 L620,730 Z" fill="#3d434a"/>
<path d="M450,763 L529,755 L620,730 L473,794 Q456,787 450,777 Z" fill="#535a62"/>
<path d="M620,730 L704,756 L718,752 L632,724 Z" fill="#4a5058"/>
<!-- bolt -->
<ellipse cx="584" cy="777" rx="12" ry="6" fill="#6a6e74" stroke="#999" stroke-width="1"/><ellipse cx="584" cy="776" rx="6" ry="4" fill="#d8dadc"/><circle cx="584" cy="776" r="2" fill="#888"/>

<!-- ===== forearm black cylinder (cyl2) ===== -->
<path d="M300,552 L440,580 L490,591 Q512,605 516,636 Q522,660 520,686 Q516,725 504,741 Q490,756 470,761 L451,762 L320,732 L300,700 Z" fill="#030303"/>

<!-- ===== gray joint 1 ===== -->
<path d="M297,556 L354,564 Q378,590 389,632 Q391,670 384,688 Q375,712 358,725 L317,733 L286,725 L300,640 Z" fill="#4d535b"/>
<path d="M317,607 L367,597 Q378,610 383,623 Q385,650 380,670 Q374,680 365,684 L319,655 Z" fill="#5f666f"/>
<path d="M319,655 L365,684 Q362,705 355,722 L318,730 L306,700 Z" fill="#565c65"/>
<path d="M319,655 L365,684" stroke="#30343a" stroke-width="0.8"/>
<polygon points="298,564 354,570 365,596 313,608" fill="#42474e"/>
<polygon points="306,570 348,575 356,592 314,600" fill="#4c5158"/>
<path d="M308,570 L312,592" stroke="#8a8e94" stroke-width="2"/>
<ellipse cx="338" cy="558" rx="4" ry="2.5" fill="#9a9ea4"/>

<!-- ===== wrist black cylinder ===== -->
<path d="M141,640 Q148,690 170,712 Q200,737 243,737 Q292,730 313,684 Q326,640 318,598 L300,560 L141,600 Z" fill="#030303"/>
<path d="M150,660 Q175,700 225,712 Q280,715 308,660 L312,690 Q290,730 243,737 Q200,737 170,712 Z" fill="#0c0c0c"/>

<!-- ===== blue ring and disk ===== -->
<path d="M91,507 L112,500 L267,490 Q282,515 289,539 Q298,565 299,588 Q299,605 296,616 Q285,635 271,648 Q250,665 225,669 Q200,668 180,662 Q160,652 148,637 Q135,620 123,599 Q108,575 99,553 Z" fill="#0b5f98"/>

<path d="M117,528 L262,502 Q278,535 283,578 Q285,600 280,610 Q268,632 255,641 Q235,653 207,654 Q185,650 166,639 Q151,628 142,615 Q128,596 117,572 Z" fill="#5a5754"/>

<!-- ===== gripper head ===== -->
<path d="M73,420 Q69,428 72,433 Q80,445 86,456 L100,495 L106,512 L120,545 L132,575 L168,560 L272,530 L262,485 L252,462 L226,388 Q219,378 210,378 Z" fill="#040404"/>
<!-- head lines -->
<path d="M87,450 L224,411 M92,469 L230,432 M99,474 L236,436 M215,413 L240,466 M87,450 L108,501 M108,501 L250,462" stroke="#2c2c2c" stroke-width="1" fill="none"/>
<path d="M80,425 Q150,395 215,382" stroke="#262626" stroke-width="5" fill="none" opacity="0.6"/>
<!-- bolts on head -->
<g fill="#9a9a9a"><circle cx="225" cy="444" r="3"/><circle cx="232" cy="464" r="3"/><circle cx="110" cy="479" r="3"/><circle cx="117" cy="501" r="3"/></g>
<!-- gray bracket band -->
<polygon points="172,498 260,469 262,483 174,508" fill="#4a4846"/>
<!-- gray step piece -->
<polygon points="123,535 176,520 186,545 130,560" fill="#4e4c4a"/>
<!-- black band -->
<polygon points="174,508 262,483 272,507 180,530" fill="#060606"/>
<!-- right knob -->
<polygon points="259,462 280,460 295,510 294,517 277,512 268,500" fill="#0e0e0e"/>
<circle cx="269" cy="476" r="3" fill="#bbb"/><circle cx="276" cy="495" r="3" fill="#bbb"/>
<!-- blue side block -->
<polygon points="91,507 109,497 129,560 123,567 109,570" fill="#0e7fd0"/><polygon points="91,507 96,505 114,568 109,570" fill="#085a9a"/>
<!-- lower head block -->
<path d="M150,552 L232,530 L243,571 L262,602 L264,637 L180,660 L169,623 L158,590 Z" fill="#050505"/>
<polygon points="153,553 232,531 242,571 168,589" fill="#45433f"/>
<path d="M200,548 Q215,538 230,543" stroke="#888" stroke-width="1.5" fill="none"/>
<polygon points="169,623 260,602 264,637 180,660" fill="#080808"/>
<path d="M169,623 L260,600" stroke="#2e2e2e" stroke-width="1"/>
<g fill="#aaa"><circle cx="177" cy="563" r="2.6"/><circle cx="222" cy="542" r="2.6"/><circle cx="183" cy="603" r="2"/><circle cx="233" cy="591" r="2"/><circle cx="187" cy="612" r="2"/><circle cx="237" cy="602" r="2"/></g>
<circle cx="258" cy="580" r="3" fill="#bbb"/><circle cx="163" cy="606" r="3" fill="#bbb"/><circle cx="106" cy="563" r="3" fill="#bbb"/>
<ellipse cx="228" cy="664" rx="5" ry="4" fill="#aaa"/>

<!-- ===== blue flange ring ===== -->
<path d="M791,545 Q793,492 842,468 Q880,463 902,520 L904,679 Q868,690 830,655 Q792,610 791,545 Z" fill="#8eaecd"/>
<path d="M807,548 Q810,500 845,483 Q875,480 896,530 L898,668 Q866,675 838,645 Q808,605 807,548 Z" fill="#070707"/>
<path d="M797,546 Q800,496 842,473" stroke="#5d7d9a" stroke-width="1" fill="none"/>
<path d="M801,600 Q815,650 850,672" stroke="#5d7d9a" stroke-width="1" fill="none"/>
<!-- slot frame -->
<path d="M820,500 Q822,490 832,490 L838,492 L846,572 L838,575 Z" fill="#9ebddb"/>
<path d="M827,503 Q828,497 833,497 L840,570 Z" fill="#050505"/>
<path d="M846,486 L870,482 Q877,484 878,495 L878,520 L868,520 L866,494 L848,496 Z" fill="#9ebddb"/>
<polygon points="836,516 872,508 874,572 842,574" fill="#b9bdc4"/>
<polygon points="846,520 866,516 866,566 850,568" fill="#8a8d92"/>
<circle cx="855" cy="524" r="8" fill="#0e0e0e"/>
<path d="M880,612 L905,622 M884,606 L905,615" stroke="#777" stroke-width="3" stroke-dasharray="2 2"/>
<!-- ===== mechanism housing ===== -->
<polygon points="891,446 899,437 1016,430 1099,495 1110,490 1184,490 1190,556 1100,560 891,560" fill="#5d6269"/>
<polygon points="899,437 1016,430 1099,495 1085,500 1010,440 906,448" fill="#6b7077"/>
<polygon points="891,446 899,437 906,448 905,520 891,520" fill="#4e535a"/>
<polygon points="980,505 1025,503 1030,515 985,520" fill="#3e3f42"/>
<!-- sensor rod -->
<path d="M958,481 L976,476" stroke="#c8cacf" stroke-width="1.5"/>
<polygon points="976,470 1063,466 1064,478 977,482" fill="#d4d6da" stroke="#666" stroke-width="0.5"/>
<rect x="1001" y="455" width="14" height="33" fill="#dcdee2" stroke="#666" stroke-width="0.6"/>
<rect x="1013" y="464" width="8" height="13" fill="#cfd1d6" stroke="#666" stroke-width="0.5"/>
<circle cx="1008" cy="461" r="2.2" fill="#777"/><circle cx="1008" cy="481" r="2.2" fill="#777"/>
<!-- dark plate shelf -->
<polygon points="812,586 884,546 935,540 1000,540 1114,545 1125,560 1110,600 1075,620 1062,629 940,609 855,640 816,609" fill="#4a4845"/>
<polygon points="812,586 884,560 936,565 938,588 850,599 816,609" fill="#5d5b57"/>
<!-- brown disc rim -->
<path d="M884,527 Q930,509 986,509 L1000,514 Q960,518 935,530 Q905,540 884,546 Z" fill="#5d594f"/>
<path d="M884,527 Q930,509 986,509" stroke="#8a877c" stroke-width="1" fill="none"/>
<!-- curved arm -->
<path d="M928,532 Q960,516 995,515 Q1060,518 1116,543 L1112,553 Q1060,530 1000,528 Q965,530 944,548 Z" fill="#77777a"/>
<path d="M944,548 Q965,530 1000,528 Q1060,530 1112,553 L1110,566 Q1040,548 990,550 Q960,553 948,572 Z" fill="#4b4946"/>
<path d="M928,532 Q960,516 995,515 Q1060,518 1116,543" stroke="#c9cbd0" stroke-width="1.2" fill="none"/>
<!-- dark stuff under shelf -->
<polygon points="816,609 855,640 898,662 893,670 862,664 838,645" fill="#0c0c0c"/>
<path d="M868,648 L872,658 M874,650 L878,660 M880,652 L884,662 M886,654 L890,664" stroke="#8a8a8f" stroke-width="2"/>
<!-- light box -->
<polygon points="850,598 938,563 940,607 855,639" fill="#dcdee5"/>
<!-- bracket -->
<polygon points="938,563 1061,572 1061,629 940,607" fill="#45464a"/>
<path d="M948,574 Q1000,565 1018,585 L1010,600 Q980,605 950,594 Z" fill="#8f8c98"/>
<path d="M952,590 Q990,585 1012,600 L1000,606 Q970,608 955,598 Z" fill="#b9b7be"/>
<polygon points="938,563 948,572 950,594 1050,614 1050,587 1061,572 1061,629 940,607" fill="#6e7075"/>
<polygon points="1012,604 1048,590 1048,612" fill="#dadce2"/>
<polygon points="855,639 940,607 1061,629 1022,648 902,646" fill="#5f6166"/>
<!-- rollers -->
<g>
<circle cx="945" cy="491" r="15" fill="#d8dade"/><circle cx="944" cy="490" r="12.5" fill="#1b2d72"/><circle cx="944" cy="490" r="5" fill="#e6e6e6"/><circle cx="944" cy="490" r="2.5" fill="#333"/>
<circle cx="1045" cy="506" r="13.5" fill="#d8dade"/><circle cx="1044" cy="505" r="11" fill="#1b2d72"/><circle cx="1044" cy="505" r="4.5" fill="#e6e6e6"/><circle cx="1044" cy="505" r="2.2" fill="#333"/>
<circle cx="947" cy="542" r="16" fill="#d8dade"/><circle cx="945" cy="541" r="13" fill="#1b2d72"/><circle cx="945" cy="541" r="5" fill="#e6e6e6"/><circle cx="945" cy="541" r="2.5" fill="#333"/>
</g>
<path d="M880,575 L905,558 L930,548" stroke="#bbb" stroke-width="3" fill="none" stroke-dasharray="2 1.5"/>


<!-- ===== blue top assembly ===== -->
<polygon points="908,350 992,352 992,372 908,368" fill="#55585c"/>
<!-- blue column (round tower) -->
<path d="M1090,252 Q1150,238 1194,258 L1196,318 Q1140,340 1066,340 L1060,300 Z" fill="#0a6cb2"/>
<path d="M1120,248 Q1160,240 1194,258 Q1185,272 1150,275 Q1125,270 1120,248 Z" fill="#0d7cc2"/>
<polygon points="1170,417 1243,417 1243,573 1189,573" fill="#0a6cb2"/>
<polygon points="1166,417 1188,420 1188,573 1180,548 1166,495" fill="#075a98"/>
<!-- bracket top face -->
<polygon points="911,363 1109,333 1221,331 1243,368 926,382" fill="#0c76bd"/>
<!-- bracket front face -->
<polygon points="911,363 926,382 1243,368 1243,420 1189,420 1170,417 1068,421 911,431" fill="#0a6cb2"/>
<polygon points="911,363 926,382 926,430 911,431" fill="#075c9c"/>
<path d="M926,395 Q1010,392 1071,421" stroke="#06508a" stroke-width="1" fill="none"/>
<g fill="#0d7ac4" stroke="#06508a" stroke-width="0.8"><circle cx="1106" cy="380" r="10"/><circle cx="1214" cy="372" r="10"/><circle cx="1214" cy="413" r="10"/></g><g fill="#2a92da" opacity="0.7"><circle cx="1104" cy="377" r="5"/><circle cx="1212" cy="369" r="5"/><circle cx="1212" cy="410" r="5"/></g>
<!-- gray cylinder under bracket -->
<path d="M1068,422 L1170,418 L1168,442 Q1130,452 1092,444 Z" fill="#6f7378"/>
<path d="M1092,444 Q1130,452 1168,442 L1170,498 L1092,498 Z" fill="#080808"/>
<polygon points="1100,487 1171,487 1184,548 1110,550" fill="#5d6269"/>
<!-- top gray cylinder -->
<rect x="1108" y="193" width="44" height="76" fill="#5f6266"/>
<rect x="1108" y="193" width="10" height="76" fill="#6c6f73"/>
<ellipse cx="1130" cy="194" rx="22" ry="7" fill="#6f7276" stroke="#3a3d41" stroke-width="0.8"/>
<path d="M1107,211 Q1130,219 1153,211 M1107,219 Q1130,227 1153,219" stroke="#06508a" stroke-width="2" fill="none"/>
<path d="M1140,248 Q1148,250 1153,246 M1140,256 Q1148,258 1153,254" stroke="#06508a" stroke-width="1.6" fill="none"/>
<!-- semicircular blue plate: side face then top face -->
<path d="M785,312 Q786,330 804,338 Q870,352 973,357 Q1040,352 1092,334 Q1130,316 1140,295 L1143,280 Q1135,300 1090,320 Q1040,338 973,344 Q880,342 806,326 Q790,322 785,312 Z" fill="#0863a6"/>
<path d="M785,312 Q786,298 797,297 L1007,250 Q1040,242 1075,240 Q1105,240 1119,244 Q1140,255 1143,275 Q1140,300 1090,320 Q1040,338 973,344 Q880,342 806,326 Q790,322 785,312 Z" fill="#0877ba"/>
<path d="M797,324 Q830,333 875,340" stroke="#e8f0f8" stroke-width="1.5" fill="none"/>
<path d="M1130,300 Q1140,290 1142,282" stroke="#e8f0f8" stroke-width="1.2" fill="none"/>
<ellipse cx="790" cy="313" rx="5" ry="10" fill="#0a3f70"/>
<!-- dark gray back plate -->
<polygon points="862,215 876,211 995,252 995,261 949,282 937,276 862,283" fill="#505357"/>
<polygon points="876,211 995,252 949,268 937,262 880,245 862,215" fill="#63666a"/>
<polygon points="880,245 926,237 995,252 949,268 937,262" fill="#5d6064"/>
<polygon points="937,262 949,268 995,252 995,261 949,282 937,276" fill="#46494d"/>
<path d="M880,245 L926,237" stroke="#3a3d41" stroke-width="0.8"/>
<ellipse cx="940" cy="252" rx="20" ry="7" fill="#7d8086" stroke="#3a3d41" stroke-width="0.8"/>
<ellipse cx="940" cy="252" rx="12" ry="4.5" fill="#a9acb0" stroke="#555" stroke-width="0.6"/>
<rect x="931" y="239" width="17" height="13" rx="3" fill="#111"/>
<ellipse cx="939.5" cy="239" rx="8.5" ry="3" fill="#2a2a2a"/>
<rect x="865" y="237" width="15" height="13" rx="3" fill="#121212"/>
<g fill="#ccc" stroke="#555" stroke-width="0.6"><ellipse cx="1074" cy="237" rx="5" ry="3"/><ellipse cx="1163" cy="238" rx="6" ry="4"/><ellipse cx="1172" cy="263" rx="6" ry="4"/></g>


<!-- shaft -->
<defs><linearGradient id="sh" x1="0" y1="0" x2="1" y2="0"><stop offset="0" stop-color="#a9adb5"/><stop offset="0.45" stop-color="#f2f3f6"/><stop offset="1" stop-color="#9ea2aa"/></linearGradient></defs>
<path d="M1110,500 Q1134,490 1158,498 L1158,547 Q1134,556 1110,549 Z" fill="url(#sh)"/>
<ellipse cx="1134" cy="498" rx="24" ry="6" fill="#dfe1e6" stroke="#666" stroke-width="0.6"/>
<path d="M1111,513 Q1134,522 1160,510 M1111,519 Q1134,528 1160,516 M1112,540 Q1134,548 1158,538" stroke="#1f4f80" stroke-width="1.5" fill="none"/>
<path d="M1092,515 L1112,512 L1112,520 L1092,522 Z" fill="#cfd2d8"/>
<!-- ===== binocular ===== -->
<defs>
  <linearGradient id="lg2" x1="0" y1="0" x2="1" y2="0">
    <stop offset="0" stop-color="#b4b8c2"/><stop offset="0.5" stop-color="#eceef3"/><stop offset="0.75" stop-color="#d6d9e0"/><stop offset="1" stop-color="#b9bdc6"/>
  </linearGradient>
  <linearGradient id="bt2" x1="0" y1="0" x2="1" y2="0">
    <stop offset="0" stop-color="#111"/><stop offset="0.45" stop-color="#262626"/><stop offset="1" stop-color="#0a0a0a"/>
  </linearGradient>
  <linearGradient id="blu2" x1="0" y1="0" x2="1" y2="0">
    <stop offset="0" stop-color="#0a7ccb"/><stop offset="0.5" stop-color="#0f93e2"/><stop offset="1" stop-color="#0a6cb2"/>
  </linearGradient>
</defs>
<!-- left black horizontal tube -->
<path d="M857,711 L918,707 L915,801 L857,803 Z" fill="#0b0b0b"/>
<ellipse cx="857" cy="757" rx="9" ry="46" fill="#121212"/>
<path d="M857,711 Q848,740 849,757 Q849,785 857,803" stroke="#2e2e2e" stroke-width="1" fill="none"/>
<path d="M835,722 L857,721 L857,794 L835,794 Z" fill="#0d0d0d"/>
<ellipse cx="836" cy="758" rx="11" ry="36" fill="#090909" stroke="#2a2a2a" stroke-width="1.2"/>
<path d="M870,730 L915,728" stroke="#1e1e1e" stroke-width="6" opacity="0.7"/>
<!-- cross cylinder -->
<path d="M1014,686 L1059,682 L1100,690 L1104,800 L1069,803 L1035,802 Q1025,798 1020,790 Z" fill="url(#lg2)"/>
<path d="M1059,682 Q1075,690 1071,696 L1076,794 L1069,803 Q1080,750 1059,682 Z" fill="#8d9199"/>
<path d="M1076,694 L1100,692 L1104,800 L1076,797 Z" fill="#cdd0d7"/>
<!-- right blue bulge -->
<path d="M1206,574 L1235,580 Q1250,600 1248,622 L1246,683 Q1240,700 1229,709 L1221,705 L1211,654 Z" fill="#0a78c4"/>
<path d="M1224,598 Q1236,640 1232,700" stroke="#d8dde2" stroke-width="1.2" fill="none"/>
<ellipse cx="1223" cy="600" rx="3" ry="5" fill="#e0e0e0" stroke="#555" stroke-width="0.6"/>
<!-- right blue cylinder -->
<path d="M1075,570 Q1090,555 1101,552 L1203,552 L1207,556 L1217,646 Q1200,640 1162,636 Q1120,645 1086,667 Z" fill="url(#blu2)"/>
<path d="M1190,636 Q1208,638 1217,646 L1214,625 Z" fill="#085a9a"/>
<path d="M1075,570 Q1140,582 1207,556" stroke="#064f88" stroke-width="1" fill="none"/>
<!-- right tower light gray -->
<path d="M1098,652 Q1150,632 1203,640 L1207,662 Q1150,655 1103,675 Z" fill="url(#lg2)"/>
<path d="M1103,675 Q1150,655 1207,662 L1215,668 Q1150,660 1095,681 Z" fill="#a9adb6"/>
<path d="M1095,681 Q1150,660 1215,668 L1223,731 Q1190,752 1158,752 Q1120,750 1103,740 Z" fill="url(#lg2)"/>
<path d="M1103,740 Q1160,722 1223,731 Q1190,752 1158,752 Q1120,750 1103,740 Z" fill="#c5c8cf"/>
<!-- right black tube -->
<path d="M1119,736 Q1160,726 1207,729 L1224,873 Q1215,905 1185,911 Q1160,912 1148,906 Z" fill="url(#bt2)"/>
<path d="M1140,880 Q1185,878 1224,862" stroke="#3a3a3a" stroke-width="1.5" fill="none"/>
<path d="M1146,884 Q1185,882 1219,868" stroke="#2c2c2c" stroke-width="1" fill="none"/>
<ellipse cx="1183" cy="900" rx="35" ry="10" fill="#040404" stroke="#2a2a2a" stroke-width="0.8" transform="rotate(-8 1183 900)"/>
<!-- left tower light gray -->
<path d="M899,639 L941,616 L1021,620 L1023,659 Q963,683 903,671 Z" fill="url(#lg2)"/>
<path d="M903,671 Q963,683 1023,659 L1014,661 Q965,690 914,679 Z" fill="#a7abb3"/>
<path d="M914,679 Q965,690 1014,661 L1022,710 Q970,735 918,730 Z" fill="url(#lg2)"/>
<path d="M918,730 Q970,735 1022,710 L1031,720 Q972,745 912,738 Z" fill="#a7abb3"/>
<path d="M912,738 Q972,745 1031,720 L1039,783 Q1005,812 978,812 Q940,808 919,796 Z" fill="url(#lg2)"/>
<path d="M919,796 Q975,776 1039,783 Q1005,812 978,812 Q940,808 919,796 Z" fill="#c7cad1"/>
<path d="M903,671 Q963,683 1023,659 M914,679 Q965,690 1014,661 M918,730 Q970,735 1022,710 M912,738 Q972,745 1031,720" stroke="#555" stroke-width="0.8" fill="none"/>
<!-- left black tube -->
<path d="M941,792 Q980,783 1020,779 L1037,947 Q1030,968 1000,969 Q975,970 963,961 Z" fill="url(#bt2)"/>
<path d="M960,935 Q1000,940 1036,924" stroke="#3a3a3a" stroke-width="1.5" fill="none"/>
<path d="M963,940 Q1000,945 1035,930" stroke="#2c2c2c" stroke-width="1" fill="none"/>
<ellipse cx="1000" cy="958" rx="35" ry="10" fill="#040404" stroke="#2a2a2a" stroke-width="0.8" transform="rotate(-6 1000 958)"/>
<polygon points="1034,942 1051,940 1051,951 1035,952" fill="#9a9ca0" stroke="#555" stroke-width="0.6"/>
<!-- right small cylinder -->
<rect x="1222" y="710" width="30" height="44" fill="#d4d7dc"/>
<path d="M1228,712 V752 M1233,712 V752" stroke="#2a6ab0" stroke-width="1.5"/>
<circle cx="1236" cy="745" r="5" fill="#ddd" stroke="#555" stroke-width="0.8"/>
</svg>


<!-- bottom -->
<div class="a" style="left:4px;top:1010px;width:1467px;height:2px;background:#8c8c8c"></div>
<div class="a" style="left:4px;top:1012px;width:1467px;height:2px;background:#f2f2f2"></div>
<div class="a" style="left:4px;top:1014px;width:1467px;height:24px;background:#dadada;border-top:1px solid #8e8e8e;border-bottom:2px solid #9a9a9a"></div>
<svg class="a" style="left:8px;top:1019px" width="70" height="14">
  <path d="M2 7 L7 3 L7 11 Z M6 7 L11 3 L11 11 Z" fill="#4a4a4a"/>
  <path d="M21 7 L27 2 L27 12 Z" fill="#9a9a9a"/>
  <path d="M36 2 L42 7 L36 12 Z" fill="#9a9a9a"/>
  <path d="M52 3 L57 7 L52 11 Z M56 3 L61 7 L56 11 Z" fill="#4a4a4a"/>
</svg>
<div class="a" style="left:80px;top:1015px;width:20px;height:17px;border:1px solid #8a8a8a;background:#e2e2e2"></div>
<div class="a" style="left:84px;top:1015px;width:12px;font-size:13px;line-height:16px;color:#9a9a9a;text-align:center">+</div>
<div class="a" style="left:100px;top:1013px;width:100px;height:23px;background:#f0f0f0;border-right:1px solid #b0b0b0;box-shadow:0 1px 0 #9a9a9a"></div>
<div class="a" style="left:117px;top:1016px;font-size:12px;font-weight:bold;line-height:16px;color:#333">Default All *</div>
<div class="a" style="left:4px;top:1038px;width:1467px;height:38px;background:#fff"></div>
<svg class="a" style="left:16px;top:1051px" width="70" height="20">
  <rect x="2.5" y="2.5" width="3" height="3" fill="none" stroke="#333" stroke-width="1"/>
  <rect x="2.5" y="8.5" width="3" height="3" fill="none" stroke="#333" stroke-width="1"/>
  <rect x="2.5" y="14.5" width="3" height="3" fill="none" stroke="#333" stroke-width="1"/>
  <rect x="9.5" y="8.5" width="3" height="3" fill="none" stroke="#333" stroke-width="1"/>
  <path d="M4 5.5 V14.5 M5.5 10 H9.5" stroke="#333" stroke-width="0.8"/>
  <ellipse cx="31" cy="10" rx="6" ry="7" fill="#3a9ad8"/>
  <ellipse cx="31" cy="10" rx="9" ry="4" transform="rotate(-45 31 10)" fill="none" stroke="#333" stroke-width="1"/>
  <rect x="49.5" y="3.5" width="15" height="15" rx="1" fill="#e6eef2" stroke="#555" stroke-width="1"/>
</svg>
<div class="a" style="left:93px;top:1048px;width:1px;height:24px;background:#d6d6d6"></div>
<div class="a" style="left:1083px;top:1041px;width:1px;height:30px;background:#dcdcdc"></div>
<svg class="a" style="left:1086px;top:1049px" width="20" height="18">
  <rect x="2" y="8" width="7" height="7" fill="#dff1f8" stroke="#7ab" stroke-width="0.8"/>
  <path d="M6 7 Q9 2 14 4 M11 9 Q16 10 17 5" stroke="#2a8aaa" stroke-width="2" fill="none"/>
</svg>
<div class="a" style="left:1108px;top:1041px;width:1px;height:30px;background:#dcdcdc"></div>
<div class="a" style="left:1111px;top:1044px;width:42px;height:22px;border:1px solid #d8d8d8;background:#fafafa"></div>
<div class="a" style="left:1138px;top:1045px;width:1px;height:20px;background:#d8d8d8"></div>
<svg class="a" style="left:1116px;top:1047px" width="34" height="16">
  <path d="M2 5 L6 3 L10 4 L10 14 L2 14 Z M12 4 L16 3 L19 5 L19 14 L11 14 Z" fill="#3a3a3a"/>
  <rect x="8" y="6" width="5" height="4" fill="#555"/>
  <path d="M25 7 L31 7 L28 10 Z" fill="#555"/>
</svg>
<div class="a" style="left:1155px;top:1041px;width:1px;height:30px;background:#dcdcdc"></div>
<div class="a" style="left:1158px;top:1044px;width:40px;height:23px;border:1px solid #cfcfcf;background:#f3f3f3"></div>
<svg class="a" style="left:1166px;top:1047px" width="22" height="18">
  <path d="M3 6 L7 2 L18 2 L18 13 L14 17 L3 17 Z" fill="#f6f0d8" stroke="#333" stroke-width="1"/>
  <path d="M3 6 L14 6 L18 2 M14 6 L14 17" fill="none" stroke="#333" stroke-width="1"/>
  <rect x="6" y="8" width="6" height="6" fill="#9fd3ec" stroke="#5aa" stroke-width="0.7"/>
</svg>
<div class="a" style="left:1288px;top:1046px;width:165px;height:22px;border:1px solid #cdcdcd;background:linear-gradient(#fafafa,#f0f0f0)"></div>
<div class="a" style="left:1437px;top:1047px;width:1px;height:20px;background:#cdcdcd"></div>
<div class="a" style="left:1296px;top:1049px;font-size:12px;line-height:16px;color:#444">Geometry</div>
<svg class="a" style="left:1440px;top:1054px" width="10" height="6"><path d="M1 1 L9 1 L5 5 Z" fill="#555"/></svg>
<svg class="a" style="left:1456px;top:1064px" width="12" height="12"><path d="M11 2 L2 11 M11 6 L6 11 M11 10 L10 11" stroke="#aaa" stroke-width="1"/></svg>

</body></html>
